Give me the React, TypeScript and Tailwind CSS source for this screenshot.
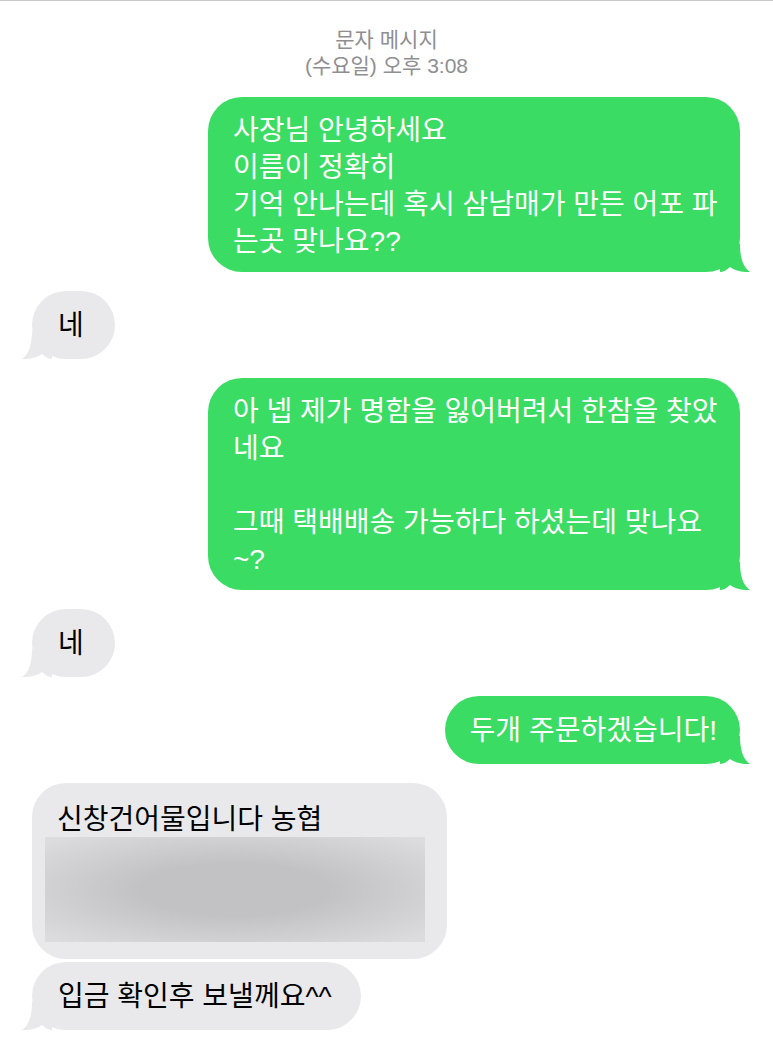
import React from "react";

const GREEN = "#3bdc64";
const GRAY = "#e9e9eb";

// bubble tail, drawn for the right side; flipped for incoming bubbles
function Tail({ side, color }: { side: "left" | "right"; color: string }) {
  return (
    <svg
      width="30"
      height="28"
      viewBox="0 0 30 28"
      className={
        side === "right"
          ? "absolute bottom-0 right-[-10px]"
          : "absolute bottom-0 left-[-10px] -scale-x-100"
      }
    >
      <path
        d="M20,0 C20,14 23,23 30,28 C24,28.5 15,27 10,23 C7,26 3,28 0,28 L0,0 Z"
        fill={color}
      />
    </svg>
  );
}

function Sent({ lines, wide = false }: { lines: string[]; wide?: boolean }) {
  return (
    <div className="flex justify-end">
      <div
        className={`relative rounded-[34px] bg-[#3bdc64] pl-[25px] pr-[23px] text-white whitespace-pre ${
          wide ? "w-[532px] pt-[15px] pb-[12px]" : "pt-[16px] pb-[15px]"
        }`}
      >
        {lines.map((l, i) => (
          <div key={i} className="h-[37px]">
            {l}
          </div>
        ))}
        <Tail side="right" color={GREEN} />
      </div>
    </div>
  );
}

function Received({ text, tail = true }: { text: string; tail?: boolean }) {
  return (
    <div className="flex justify-start">
      <div className="relative min-w-[83px] rounded-[34px] bg-[#e9e9eb] pl-[26px] pr-[29px] pt-[16px] pb-[15px] text-black whitespace-pre">
        {text}
        {tail && <Tail side="left" color={GRAY} />}
      </div>
    </div>
  );
}

export default function App() {
  return (
    <div className="min-h-[1056px] w-[773px] bg-white border-t border-[#c8c8c8] font-['Liberation_Sans','Noto_Sans_CJK_KR',sans-serif] text-[28px] leading-[37px]">
      {/* header */}
      <div className="pt-[26px] text-center text-[21px] leading-[26px] text-[#8e8e93]">
        <div>문자 메시지</div>
        <div>(수요일) 오후 3:08</div>
      </div>

      <div className="mt-[18px] flex flex-col gap-[19px] pl-[32px] pr-[33px]">
        <Sent
          wide
          lines={[
            "사장님 안녕하세요",
            "이름이 정확히",
            "기억 안나는데 혹시 삼남매가 만든 어포 파",
            "는곳 맞나요??",
          ]}
        />
        <Received text="네" />
        <Sent
          wide
          lines={[
            "아 넵 제가 명함을 잃어버려서 한참을 찾았",
            "네요",
            "",
            "그때 택배배송 가능하다 하셨는데 맞나요",
            "~?",
          ]}
        />
        <Received text="네" />
        <Sent lines={["두개 주문하겠습니다!"]} />

        {/* two incoming in a row: tight spacing */}
        <div className="flex flex-col gap-[3px]">
          <div className="flex justify-start">
            <div className="w-[415px] rounded-[34px] bg-[#e9e9eb] pl-[13px] pr-[22px] pt-[20px] pb-[17px]">
              <div className="ml-[12px] leading-[34px] text-black">신창건어물입니다 농협</div>
              <div className="h-[105px] bg-[radial-gradient(ellipse_at_center,#c2c2c4_35%,#dcdcde_95%)]" />
            </div>
          </div>
          <Received text="입금 확인후 보낼께요^^" />
        </div>
      </div>
    </div>
  );
}
